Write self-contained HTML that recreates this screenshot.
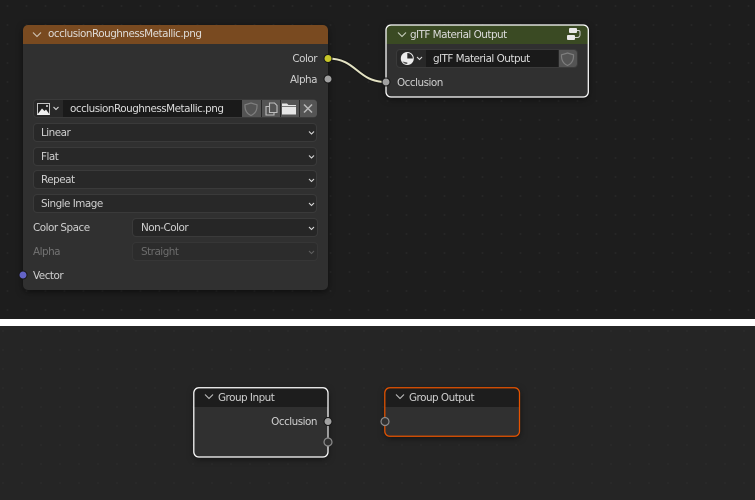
<!DOCTYPE html>
<html>
<head>
<meta charset="utf-8">
<style>
html,body{margin:0;padding:0;background:#1d1d1d}
#r{position:relative;width:755px;height:500px;overflow:hidden;background:#1d1d1d;font-family:"DejaVu Sans","Liberation Sans",sans-serif;font-size:10.4px;letter-spacing:-.5px;color:#d0d0d0;line-height:14px}
.a,.t,.dd,.n,.h{position:absolute;box-sizing:border-box}
.bg{position:absolute;left:0;width:755px;background-size:19px 19px}
.n{background:#303030;border-radius:5px;box-shadow:0 2px 7px rgba(0,0,0,.5)}
.h{left:0;top:0;width:100%;border-radius:5px 5px 0 0}
.t{white-space:nowrap}
.dd{background:#282828;border:1px solid #3a3a3a;border-radius:4px;height:19px;color:#d0d0d0;padding:2px 0 0 7px}
svg{position:absolute;overflow:visible}
</style>
</head>
<body>
<div id="r">
<div class="bg" style="top:0;height:319px;background-color:#1d1d1d;background-image:radial-gradient(circle at center,#262626 0,#262626 .8px,transparent 1.2px);background-position:-2px -3.500px"></div>
<div class="a" style="left:0;top:319px;width:755px;height:7px;background:#fff"></div>
<div class="bg" style="top:326px;height:174px;background-color:#252525;background-image:radial-gradient(circle at center,#2a2a2a 0,#2a2a2a .8px,transparent 1.2px);background-position:-6.500px -4.500px"></div>

<!-- Image node -->
<div class="n" style="left:23px;top:25px;width:305px;height:265px">
  <div class="h" style="height:19px;background:#794a20"></div>
</div>
<svg style="left:0;top:0" width="755" height="500" fill="none">
  <path d="M33 32.500l4 4 4-4" stroke="#d0c4b6" stroke-width="1.100"/>
</svg>
<div class="t" style="left:48px;top:27px;color:#dfdcd8">occlusionRoughnessMetallic.png</div>
<div class="t" style="right:438px;top:52px">Color</div>
<div class="t" style="right:438px;top:73px">Alpha</div>

<!-- image selector -->
<div class="a" style="left:33px;top:99px;width:284px;height:19px;background:#282828;border:1px solid #3a3a3a;border-radius:4px"></div>
<div class="a" style="left:63px;top:100px;width:179px;height:17px;background:#1a1a1a"></div>
<div class="t" style="left:70px;top:102px;color:#dcdcdc">occlusionRoughnessMetallic.png</div>
<div class="a" style="left:242px;top:100px;width:18.500px;height:17px;background:#545454"></div>
<div class="a" style="left:261.500px;top:100px;width:18.500px;height:17px;background:#545454"></div>
<div class="a" style="left:281px;top:100px;width:18px;height:17px;background:#545454"></div>
<div class="a" style="left:299.500px;top:100px;width:17px;height:17px;background:#545454;border-radius:0 3px 3px 0"></div>

<div class="dd" style="left:33px;top:123px;width:284px">Linear</div>
<div class="dd" style="left:33px;top:147px;width:284px">Flat</div>
<div class="dd" style="left:33px;top:170px;width:284px">Repeat</div>
<div class="dd" style="left:33px;top:194px;width:284px">Single Image</div>
<div class="t" style="left:33px;top:221px">Color Space</div>
<div class="dd" style="left:132px;top:218px;width:185.500px;padding-left:8px;background:#262626">Non-Color</div>
<div class="t" style="left:33px;top:245px;color:#737373">Alpha</div>
<div class="dd" style="left:132px;top:242px;width:185.500px;padding-left:8px;color:#6c6c6c;background:#2c2c2c;border-color:#363636">Straight</div>
<div class="t" style="left:33px;top:269px">Vector</div>

<!-- gltf node -->
<div class="n" style="left:386px;top:25px;width:202px;height:72px">
  <div class="h" style="height:19px;background:#3a4a23"></div>
</div>
<div class="t" style="left:410px;top:28px;color:#dcdcdc">glTF Material Output</div>
<div class="a" style="left:396px;top:49px;width:181.500px;height:19px;background:#282828;border:1px solid #3a3a3a;border-radius:4px"></div>
<div class="a" style="left:426px;top:50px;width:132px;height:17px;background:#1a1a1a"></div>
<div class="t" style="left:433px;top:52px;color:#dcdcdc">glTF Material Output</div>
<div class="a" style="left:558.500px;top:50px;width:18px;height:17px;background:#545454;border-radius:0 3px 3px 0"></div>
<div class="t" style="left:397px;top:76px">Occlusion</div>

<!-- Group input -->
<div class="n" style="left:194px;top:388px;width:134px;height:69px">
  <div class="h" style="height:19px;background:#1d1d1d"></div>
</div>
<div class="t" style="left:218px;top:391px;color:#d0d0d0">Group Input</div>
<div class="t" style="right:438px;top:415px">Occlusion</div>

<!-- Group output -->
<div class="n" style="left:385px;top:388px;width:135px;height:48px">
  <div class="h" style="height:19px;background:#1d1d1d"></div>
</div>
<div class="t" style="left:409px;top:391px;color:#d0d0d0">Group Output</div>

<svg style="left:0;top:0" width="755" height="500" fill="none">
  <!-- selection outlines -->
  <rect x="386" y="25" width="202.300" height="72" rx="5" stroke="#ffffff" stroke-width="1.250"/>
  <rect x="193.800" y="387.800" width="134.200" height="69.200" rx="5" stroke="#ffffff" stroke-width="1.250"/>
  <rect x="384.800" y="387.800" width="134.700" height="48.500" rx="5" stroke="#e65300" stroke-width="1.250"/>

  <!-- wire -->
  <path d="M328 58.500C357 58.500 357 82 386 82" stroke="#161616" stroke-width="4"/>
  <path d="M328 58.500C357 58.500 357 82 386 82" stroke="#e4e3c4" stroke-width="2"/>
  <path d="M328 421V442" stroke="#dcdcdc" stroke-width="1"/>

  <!-- sockets -->
  <circle cx="328" cy="58.500" r="4" fill="#c7c729" stroke="#161616"/>
  <circle cx="328" cy="79" r="4" fill="#a1a1a1" stroke="#161616"/>
  <circle cx="23" cy="275" r="4" fill="#6363c7" stroke="#161616"/>
  <circle cx="386" cy="82" r="4" fill="#a1a1a1" stroke="#161616"/>
  <circle cx="328" cy="421.500" r="4" fill="#a1a1a1" stroke="#161616"/>
  <circle cx="328" cy="442" r="4" fill="#303030" stroke="#8c8c8c" stroke-width="1.200"/>
  <circle cx="385" cy="421.500" r="4" fill="#303030" stroke="#8c8c8c" stroke-width="1.200"/>

  <!-- collapse chevrons -->
  <path d="M398 32.500l4 4 4-4" stroke="#c9cfc0" stroke-width="1.100"/>
  <path d="M205 394.500l4 4 4-4" stroke="#bdbdbd" stroke-width="1.100"/>
  <path d="M396 394.500l4 4 4-4" stroke="#bdbdbd" stroke-width="1.100"/>

  <!-- image icon -->
  <rect x="37.500" y="103.500" width="12" height="11" fill="#1f1f1f" stroke="#c4c4c4" stroke-width="1"/>
  <path d="M37 115l5-6.500 2.500 2.500 1.500-1.500 4 5.500z" fill="#f0f0f0"/>
  <circle cx="47" cy="106" r="1" fill="#dcdcdc"/>
  <path d="M53.500 107l2.500 2.500 2.500-2.500" stroke="#d8d8d8" stroke-width="1.100"/>

  <!-- shield icons -->
  <path d="M251 103l6 1.800c.3 5-1.500 8.700-6 10.700-4.500-2-6.300-5.700-6-10.700z" stroke="#7e7e7e" stroke-width="1.200"/>
  <path d="M567.500 53l6 1.800c.3 5-1.500 8.700-6 10.700-4.500-2-6.300-5.700-6-10.700z" stroke="#7e7e7e" stroke-width="1.200"/>

  <!-- duplicate icon -->
  <path d="M269.500 106.500h-3.500v8.500h8v-2.500" stroke="#bdbdbd" stroke-width="1.100"/>
  <path d="M269.500 112.500v-9.500h5l2.500 2.500v7z" stroke="#bdbdbd" stroke-width="1.100" fill="#545454"/>

  <!-- folder icon -->
  <path d="M282 103.500h5l1.500 1.500h7.500v1.200h-14z" fill="#e6e6e6"/>
  <rect x="282" y="107" width="14" height="7.500" fill="#e6e6e6"/>

  <!-- x icon -->
  <path d="M304 104.500l8 8M312 104.500l-8 8" stroke="#b9b9b9" stroke-width="1.500"/>

  <!-- material icon -->
  <circle cx="407.300" cy="58.500" r="6.500" fill="#ececec"/>
  <path d="M407.300 58.500V53A5.500 5.500 0 0 1 412.800 58.500Z" fill="#2a2a2a"/>
  <path d="M402.500 61.500A5.500 5.500 0 0 0 407.300 64L407.300 62.500Z" fill="#555"/>
  <path d="M417 57l2.500 2.500 2.500-2.500" stroke="#d8d8d8" stroke-width="1.100"/>

  <!-- output icon -->
  <rect x="569" y="28" width="8" height="5" rx="1" fill="#e8e8e8"/>
  <rect x="567" y="35" width="8" height="5" rx="1" fill="#e8e8e8"/>
  <path d="M577 30.500h1.500c1 0 1.500.8 1.500 1.500v3c0 1.500-1.500 2.500-2.500 2.500h-2.500" stroke="#cfcfcf" stroke-width="1"/>

  <!-- dropdown chevrons -->
  <g stroke="#d8d8d8" stroke-width="1.100">
    <path d="M309 131.500l2.500 2.500 2.500-2.500"/>
    <path d="M309 155.500l2.500 2.500 2.500-2.500"/>
    <path d="M309 179l2.500 2.500 2.500-2.500"/>
    <path d="M309 203l2.500 2.500 2.500-2.500"/>
    <path d="M309 227l2.500 2.500 2.500-2.500"/>
    <path d="M309 251l2.500 2.500 2.500-2.500" stroke="#5e5e5e"/>
  </g>
</svg>
</div>
</body>
</html>
